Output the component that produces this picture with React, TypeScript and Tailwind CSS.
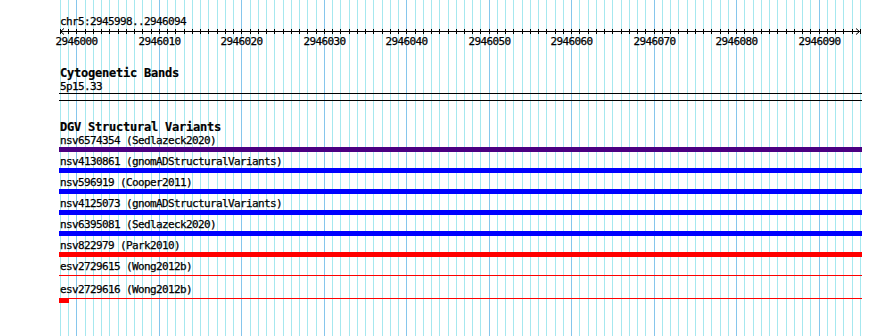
import React from "react";

const SCALE = 8.245;
const X0 = 60;
const LEFT = 59;
const xs = Array.from({ length: 98 }, (_, i) => Math.round(X0 + i * SCALE));

const small =
  "font-['DejaVu_Sans_Mono',monospace] text-[11px] leading-[13px] tracking-[-0.62px] text-black whitespace-pre [-webkit-text-stroke:0.25px_#000]";
const bold =
  "font-['DejaVu_Sans_Mono',monospace] text-[12px] font-bold leading-[13px] tracking-[-0.22px] text-black whitespace-pre [-webkit-text-stroke:0.2px_#000]";

type Row = { label: string; kind: "bar" | "line" | "lineRect"; color: string };

const rows: Row[] = [
  { label: "nsv6574354 (Sedlazeck2020)", kind: "bar", color: "bg-[#4b0082]" },
  { label: "nsv4130861 (gnomADStructuralVariants)", kind: "bar", color: "bg-[#0000ff]" },
  { label: "nsv596919 (Cooper2011)", kind: "bar", color: "bg-[#0000ff]" },
  { label: "nsv4125073 (gnomADStructuralVariants)", kind: "bar", color: "bg-[#0000ff]" },
  { label: "nsv6395081 (Sedlazeck2020)", kind: "bar", color: "bg-[#0000ff]" },
  { label: "nsv822979 (Park2010)", kind: "bar", color: "bg-[#ff0000]" },
  { label: "esv2729615 (Wong2012b)", kind: "line", color: "bg-[#ff0000]" },
  { label: "esv2729616 (Wong2012b)", kind: "lineRect", color: "bg-[#ff0000]" },
];

function Grid() {
  return (
    <svg className="absolute left-0 top-0" width={890} height={336}>
      {xs.map((x, i) => (
        <line
          key={i}
          x1={x + 0.5}
          x2={x + 0.5}
          y1={0}
          y2={336}
          stroke={(i - 2) % 10 === 0 ? "#86c6ec" : "#a6e8ef"}
          strokeWidth={1}
        />
      ))}
    </svg>
  );
}

function Ruler() {
  const w = 803;
  return (
    <svg width={w} height={7} className="block">
      <line x1={1} x2={w - 1} y1={3.5} y2={3.5} stroke="#000" strokeWidth={1} />
      {xs.map((x, i) => (
        <line
          key={i}
          x1={x - LEFT + 0.5}
          x2={x - LEFT + 0.5}
          y1={1}
          y2={6}
          stroke="#000"
          strokeWidth={1}
        />
      ))}
      <polyline points="5,0.5 1.5,3.5 5,6.5" fill="none" stroke="#000" strokeWidth={1} />
      <polyline points={`${w - 6},0.5 ${w - 2.5},3.5 ${w - 6},6.5`} fill="none" stroke="#000" strokeWidth={1} />
    </svg>
  );
}

export default function App() {
  const labels = [0, 10, 20, 30, 40, 50, 60, 70, 80, 90];
  return (
    <div className="relative w-[890px] h-[336px] bg-white overflow-hidden">
      <Grid />
      <div className="relative pt-[15px] pl-[59px] w-[862px]">
        <div className={`${small} pl-px`}>chr5:2945998..2946094</div>
        <Ruler />
        <div className="relative h-[13px]">
          {labels.map((o) => {
            const x = xs[o + 2] - LEFT;
            return (
              <span
                key={o}
                className={`${small} absolute top-0 w-[42px] text-center`}
                style={{ left: x - 20.5 }}
              >
                {2946000 + o}
              </span>
            );
          })}
        </div>
        <div className={`${bold} mt-[19px] pl-px`}>Cytogenetic Bands</div>
        <div className={`${small} pl-px`}>5p15.33</div>
        <div className="h-[8px] border-y border-black" />
        <div className={`${bold} mt-[20px] pl-px`}>DGV Structural Variants</div>
        <div className="flex flex-col">
          {rows.map((r) => (
            <div key={r.label} className="mb-[3px]">
              <div className={`${small} pl-px`}>{r.label}</div>
              {r.kind === "bar" ? (
                <div className={`h-[5px] ${r.color}`} />
              ) : (
                <div className="relative h-[5px]">
                  <div className={`mt-[2px] h-px ${r.color}`} />
                  {r.kind === "lineRect" && (
                    <div className={`absolute left-0 top-0 w-[10px] h-[5px] ${r.color}`} />
                  )}
                </div>
              )}
            </div>
          ))}
        </div>
      </div>
    </div>
  );
}
